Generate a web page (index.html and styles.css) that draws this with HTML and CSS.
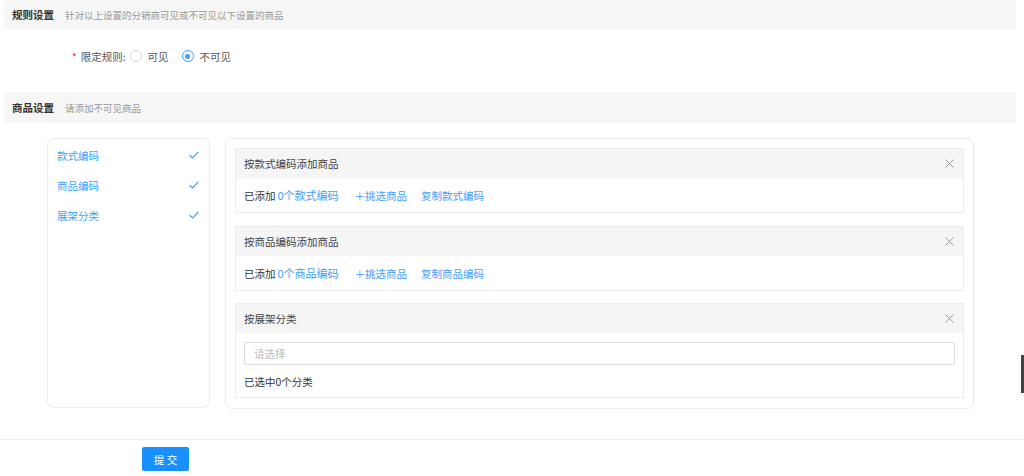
FILE: index.html
```html
<!DOCTYPE html>
<html lang="zh">
<head>
<meta charset="utf-8">
<link rel="stylesheet" href="styles.css">
</head>
<body>
<div class="page">
  <div class="sec-head"><span class="sec-title">规则设置</span><span class="sec-sub">针对以上设置的分销商可见或不可见以下设置的商品</span></div>
  <div class="form-row">
    <span class="req">*</span><span class="label">限定规则:</span>
    <label class="radio"><span class="circle"></span><span>可见</span></label>
    <label class="radio on"><span class="circle"></span><span>不可见</span></label>
  </div>
  <div class="sec-head sec2"><span class="sec-title">商品设置</span><span class="sec-sub">请添加不可见商品</span></div>
  <div class="content">
    <div class="side">
      <div class="side-item"><span>款式编码</span><svg class="check" viewBox="0 0 10 8" width="10" height="8"><path d="M0.6 4.2 L3.6 7 L9.4 0.8" fill="none" stroke="#409eff" stroke-width="1.2"/></svg></div>
      <div class="side-item"><span>商品编码</span><svg class="check" viewBox="0 0 10 8" width="10" height="8"><path d="M0.6 4.2 L3.6 7 L9.4 0.8" fill="none" stroke="#409eff" stroke-width="1.2"/></svg></div>
      <div class="side-item"><span>展架分类</span><svg class="check" viewBox="0 0 10 8" width="10" height="8"><path d="M0.6 4.2 L3.6 7 L9.4 0.8" fill="none" stroke="#409eff" stroke-width="1.2"/></svg></div>
    </div>
    <div class="main">
      <div class="panel">
        <div class="panel-head"><span>按款式编码添加商品</span><svg class="close" viewBox="0 0 9 9" width="9" height="9"><path d="M0.5 0.5 L8.5 8.5 M8.5 0.5 L0.5 8.5" stroke="#999" stroke-width="1"/></svg></div>
        <div class="panel-body"><span>已添加</span><span class="count">0个款式编码</span><span class="link">＋挑选商品</span><span class="link">复制款式编码</span></div>
      </div>
      <div class="panel p2">
        <div class="panel-head"><span>按商品编码添加商品</span><svg class="close" viewBox="0 0 9 9" width="9" height="9"><path d="M0.5 0.5 L8.5 8.5 M8.5 0.5 L0.5 8.5" stroke="#999" stroke-width="1"/></svg></div>
        <div class="panel-body"><span>已添加</span><span class="count">0个商品编码</span><span class="link">＋挑选商品</span><span class="link">复制商品编码</span></div>
      </div>
      <div class="panel p3">
        <div class="panel-head"><span>按展架分类</span><svg class="close" viewBox="0 0 9 9" width="9" height="9"><path d="M0.5 0.5 L8.5 8.5 M8.5 0.5 L0.5 8.5" stroke="#999" stroke-width="1"/></svg></div>
        <div class="panel-body col">
          <div class="select">请选择</div>
          <div class="selected">已选中0个分类</div>
        </div>
      </div>
    </div>
  </div>
</div>
<div class="footer">
  <button class="submit">提 交</button>
</div>
<div class="scroll-thumb"></div>
</body>
</html>
```
FILE: styles.css
```css
html, body {
  margin: 0;
  padding: 0;
  background: #fff;
  font-family: "Noto Sans CJK SC", "Noto Sans", sans-serif;
  color: #333;
  font-size: 10.5px;
}
.page {
  padding: 0 8px 0 4px;
}
.sec-head {
  height: 29px;
  background: #f6f6f6;
  display: flex;
  align-items: center;
  padding-left: 8px;
}
.sec2 {
  height: 31px;
  margin-top: 26px;
}
.sec-title {
  font-weight: bold;
  font-size: 10.5px;
  color: #333;
}
.sec-sub {
  margin-left: 11px;
  font-size: 9.5px;
  color: #999;
}
.form-row {
  display: flex;
  align-items: center;
  height: 20px;
  margin-top: 17px;
  padding-left: 68px;
  color: #555;
}
.req {
  color: #f5222d;
  margin-right: 4px;
  font-size: 10px;
}
.label {
  margin-right: 4px;
}
.radio {
  display: flex;
  align-items: center;
  margin-right: 13px;
}
.circle {
  width: 10px;
  height: 10px;
  border: 1px solid #d6d6d6;
  border-radius: 50%;
  margin-right: 6px;
  box-sizing: content-box;
  position: relative;
}
.radio.on .circle {
  border-color: #409eff;
}
.radio.on .circle::after {
  content: "";
  position: absolute;
  left: 2.5px;
  top: 2.5px;
  width: 5px;
  height: 5px;
  border-radius: 50%;
  background: #409eff;
}
.content {
  display: flex;
  align-items: flex-start;
  gap: 15px;
  margin-top: 15px;
  padding-left: 43px;
}
.side {
  width: 161px;
  height: 267px;
  border: 1px solid #ececec;
  border-radius: 7px;
  padding-top: 1px;
  box-sizing: content-box;
}
.side-item {
  display: flex;
  align-items: center;
  justify-content: space-between;
  height: 30px;
  padding: 0 10px 0 9px;
  color: #409eff;
}
.main {
  width: 729px;
  border: 1px solid #ececec;
  border-radius: 7px;
  padding: 9px 9px 10px 9px;
  display: flex;
  flex-direction: column;
}
.panel {
  border: 1px solid #ececec;
}
.p2 {
  margin-top: 13px;
}
.p3 {
  margin-top: 12px;
}
.panel-head {
  height: 29px;
  background: #f5f5f5;
  display: flex;
  align-items: center;
  justify-content: space-between;
  padding: 0 9px 0 8px;
  color: #444;
}
.panel-body {
  height: 34px;
  display: flex;
  align-items: center;
  padding-left: 8px;
  color: #333;
}
.count {
  color: #409eff;
  font-size: 11px;
  margin-left: 2px;
}
.link {
  color: #409eff;
  margin-left: 16px;
}
.link + .link {
  margin-left: 14px;
}
.panel-body.col {
  height: auto;
  flex-direction: column;
  align-items: stretch;
  padding: 9px 8px 6px 8px;
}
.select {
  height: 21px;
  border: 1px solid #dcdcdc;
  border-radius: 2px;
  display: flex;
  align-items: center;
  padding-left: 9px;
  color: #bbb;
}
.selected {
  margin-top: 6px;
  height: 20px;
  display: flex;
  align-items: center;
}
.footer {
  margin-top: 30px;
  border-top: 1px solid #ececec;
  padding: 7px 0 0 142px;
}
.submit {
  width: 47px;
  height: 24px;
  border: none;
  border-radius: 2px;
  background: #1890ff;
  color: #fff;
  font-family: "Noto Sans CJK SC", sans-serif;
  font-size: 10.5px;
  padding: 0;
}
.scroll-thumb {
  position: absolute;
  right: 0;
  top: 355px;
  width: 3px;
  height: 38px;
  background: #444;
}
```
